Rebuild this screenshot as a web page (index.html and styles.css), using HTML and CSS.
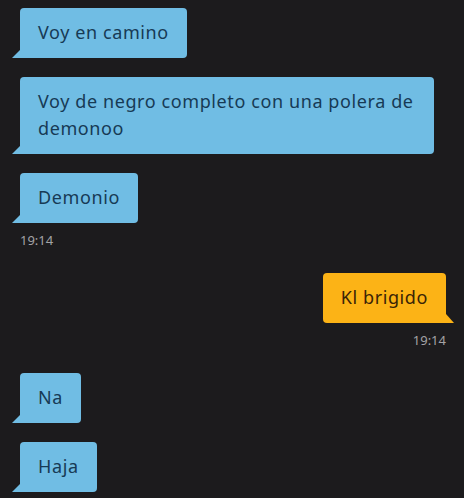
FILE: index.html
```html
<!DOCTYPE html>
<html lang="es">
<head>
    <meta charset="UTF-8">
    <title>Chat</title>
    <link rel="stylesheet" href="styles.css">
</head>
<body>
    <div class="chat">
        <!-- Mensajes recibidos -->
        <div class="msg in">
            <div class="bubble">Voy en camino</div>
        </div>
        <div class="msg in">
            <div class="bubble">Voy de negro completo con una polera de demonoo</div>
        </div>
        <div class="msg in">
            <div class="bubble">Demonio</div>
            <div class="time">19:14</div>
        </div>

        <!-- Mensaje enviado -->
        <div class="msg out">
            <div class="bubble">Kl brigido</div>
            <div class="time">19:14</div>
        </div>

        <div class="msg in">
            <div class="bubble">Na</div>
        </div>
        <div class="msg in">
            <div class="bubble">Haja</div>
        </div>
    </div>
</body>
</html>
```

FILE: styles.css
```css
body {
    margin: 0;
    background: #1c1b1d;
    font-family: "Noto Sans", "Open Sans", sans-serif;
}
.chat {
    display: flex;
    flex-direction: column;
    gap: 19px;
    padding: 8px 18px 0 20px;
}
.msg {
    display: flex;
    flex-direction: column;
    align-items: flex-start;
}
.msg.out {
    align-items: flex-end;
}
.bubble {
    position: relative;
    max-width: 378px;
    padding: 11px 18px 12px 18px;
    font-size: 18px;
    line-height: 27px;
    letter-spacing: 0.6px;
    border-radius: 4px;
}
/* Burbuja azul (recibido) */
.in .bubble {
    background: #70bde4;
    color: #173a55;
    border-bottom-left-radius: 0;
}
.in .bubble::before {
    content: "";
    position: absolute;
    left: -8px;
    bottom: 0;
    width: 8px;
    height: 8px;
    background: #70bde4;
    clip-path: polygon(100% 0, 100% 100%, 0 100%);
}
/* Burbuja naranja (enviado) */
.out .bubble {
    background: #fcb316;
    color: #3a2406;
    border-bottom-right-radius: 0;
}
.out .bubble::before {
    content: "";
    position: absolute;
    right: -8px;
    bottom: 0;
    width: 8px;
    height: 9px;
    background: #fcb316;
    clip-path: polygon(0 0, 100% 100%, 0 100%);
}
.time {
    margin-top: 9px;
    margin-bottom: 6px;
    font-size: 13px;
    line-height: 16px;
    color: #a3a3a5;
}
```
